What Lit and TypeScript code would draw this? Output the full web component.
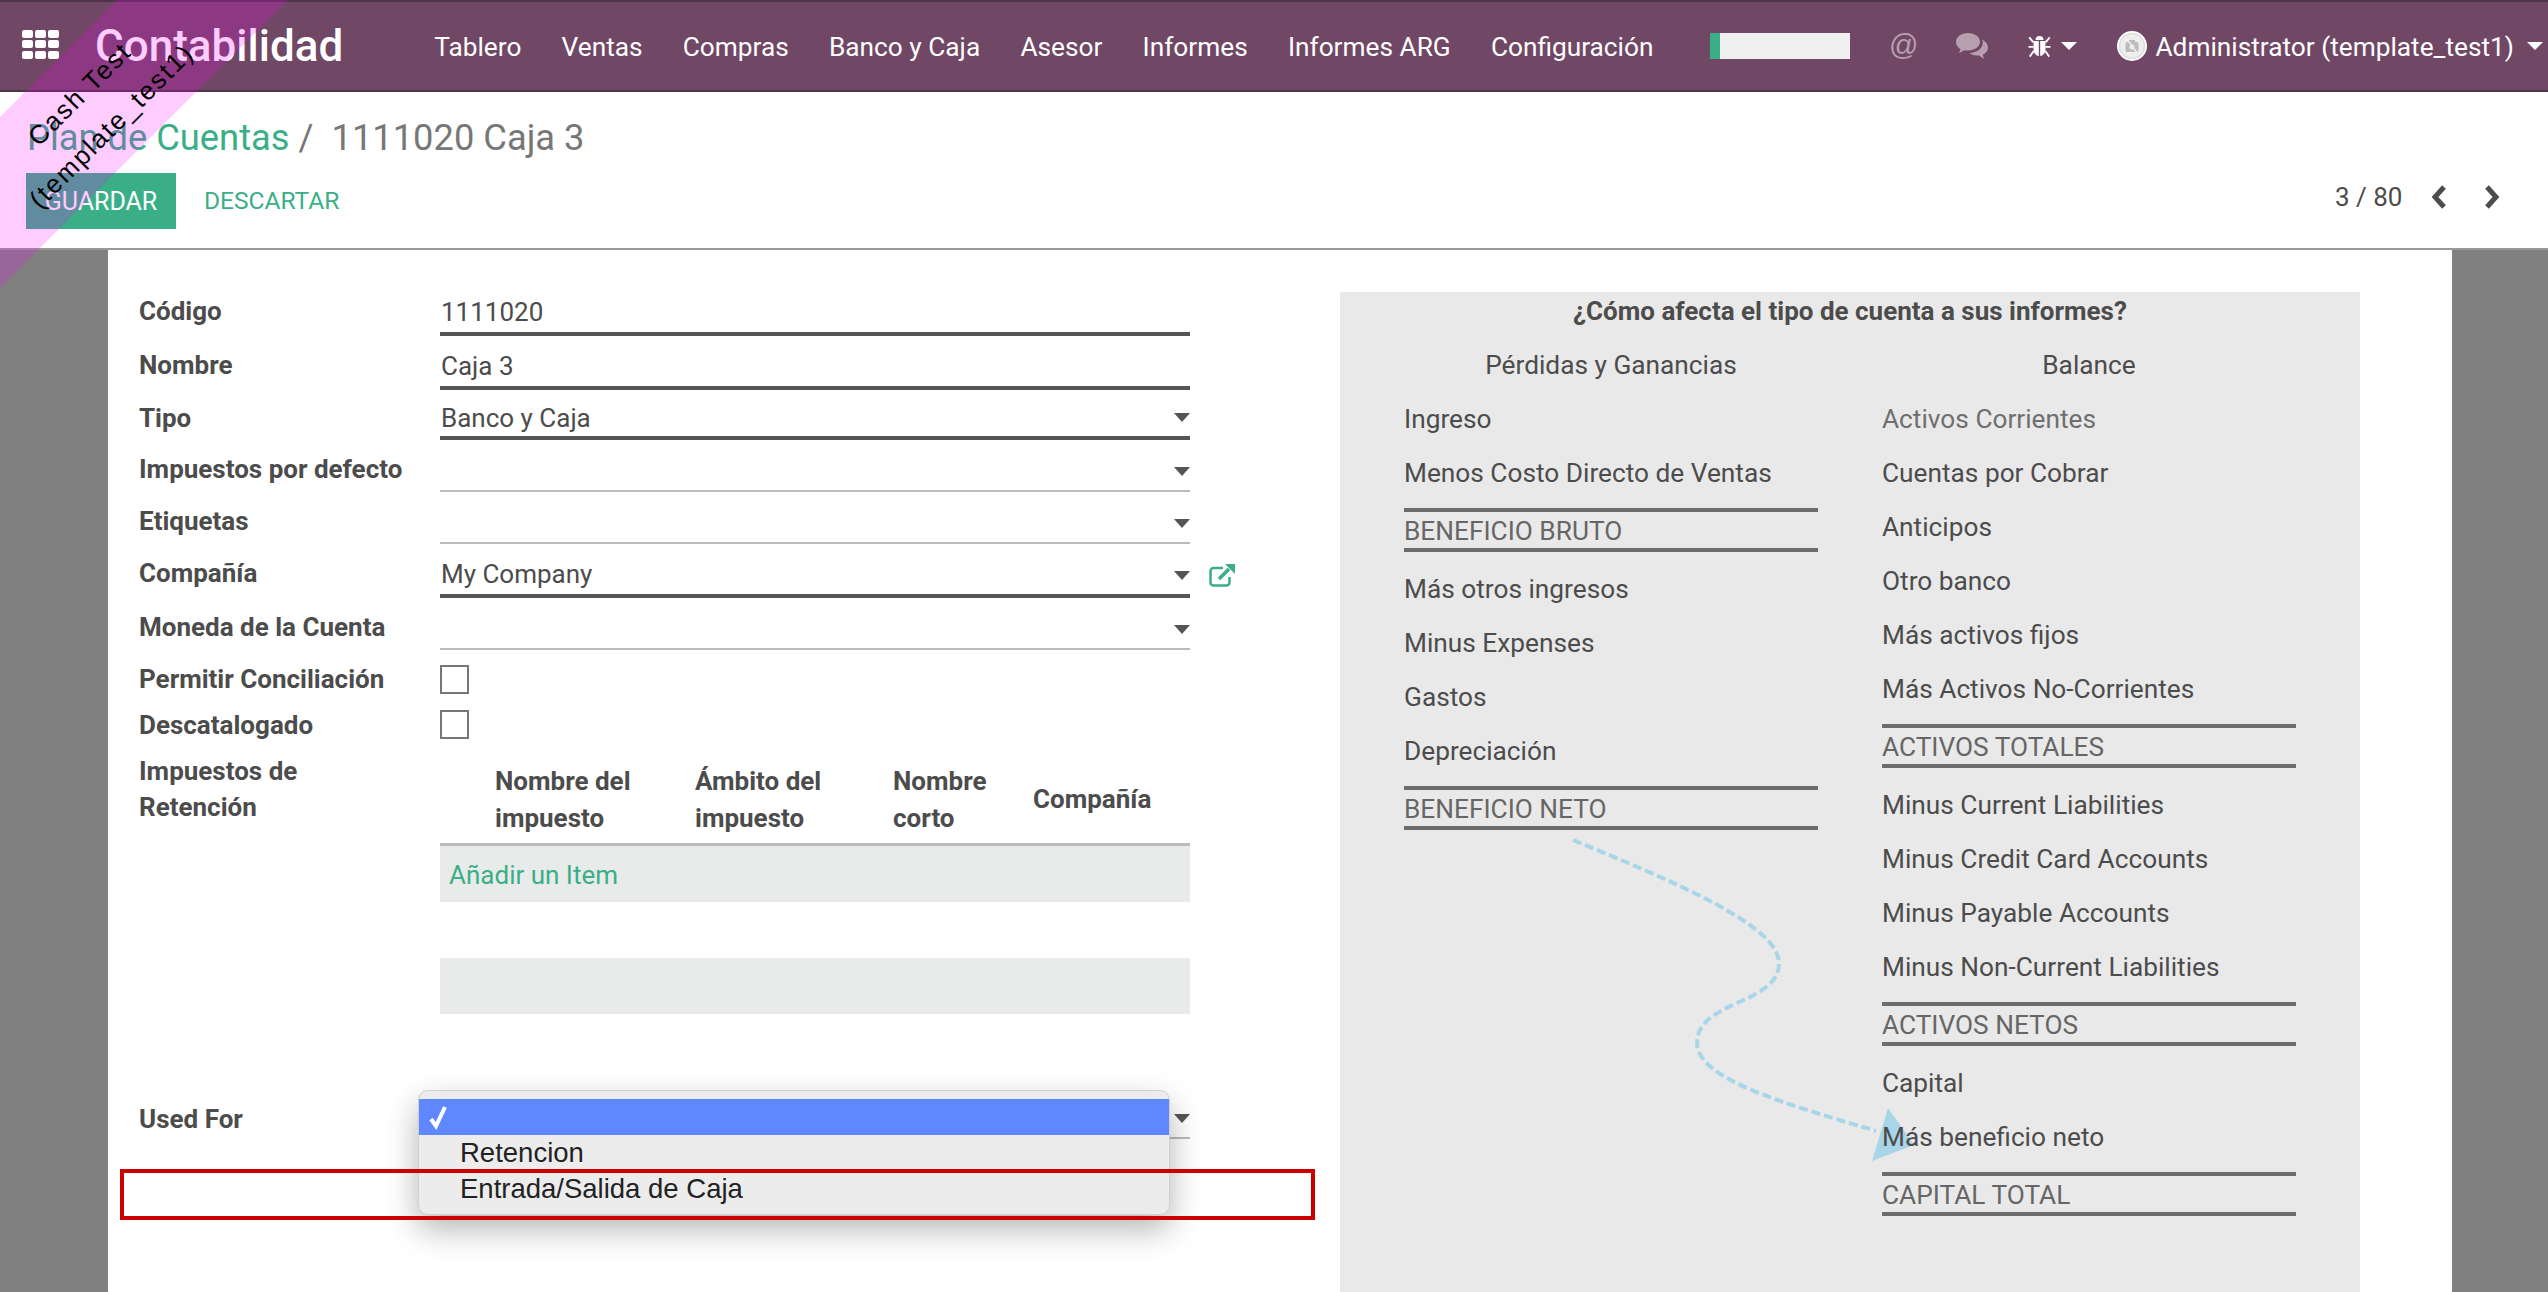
// @ts-nocheck
import {html, css, LitElement} from 'lit';
import {customElement} from 'lit/decorators.js';
import {styleMap} from 'lit/directives/style-map.js';
import {classMap} from 'lit/directives/class-map.js';

const NAV = ['Tablero', 'Ventas', 'Compras', 'Banco y Caja', 'Asesor', 'Informes', 'Informes ARG', 'Configuración'];

// h = row height, d = distance from the label centre to the row bottom
const ROWS = [
  {label: 'Código', value: '1111020', h: 44, d: 25, strong: true, input: true},
  {label: 'Nombre', value: 'Caja 3', h: 54, d: 25, strong: true, input: true},
  {label: 'Tipo', value: 'Banco y Caja', h: 50, d: 22, strong: true, caret: true},
  {label: 'Impuestos por defecto', value: '', h: 52, d: 23, caret: true},
  {label: 'Etiquetas', value: '', h: 52, d: 23, caret: true},
  {label: 'Compañía', value: 'My Company', h: 54, d: 25, strong: true, input: true, caret: true, ext: true},
  {label: 'Moneda de la Cuenta', value: '', h: 52, d: 23, caret: true},
];

const LEFT = [
  'Ingreso', 'Menos Costo Directo de Ventas', {total: 'BENEFICIO BRUTO'},
  'Más otros ingresos', 'Minus Expenses', 'Gastos', 'Depreciación', {total: 'BENEFICIO NETO'},
];
const RIGHT = [
  {muted: 'Activos Corrientes'}, 'Cuentas por Cobrar', 'Anticipos', 'Otro banco', 'Más activos fijos',
  'Más Activos No-Corrientes', {total: 'ACTIVOS TOTALES'},
  'Minus Current Liabilities', 'Minus Credit Card Accounts', 'Minus Payable Accounts',
  'Minus Non-Current Liabilities', {total: 'ACTIVOS NETOS'},
  'Capital', 'Más beneficio neto', {total: 'CAPITAL TOTAL'},
];

@customElement('app-root')
export class AppRoot extends LitElement {
  static styles = css`
    :host {
      display: flex;
      flex-direction: column;
      position: relative;
      width: 2548px;
      height: 1292px;
      overflow: hidden;
      background: #808080;
      font-family: Roboto, "Liberation Sans", sans-serif;
      font-size: 26px;
      color: #4c4c4c;
    }
    * { box-sizing: border-box; }

    .nav {
      flex: none;
      display: flex;
      align-items: center;
      height: 92px;
      background: #704764;
      border-top: 2px solid #4f3349;
      border-bottom: 2px solid #4f3349;
      color: #fff;
    }
    .apps {
      display: grid;
      grid-template-columns: repeat(3, 11px);
      grid-auto-rows: 8px;
      gap: 2.500px 2px;
      margin: -4px 0 0 22px;
    }
    .apps span { background: #fff; border-radius: 2px; }
    .brand { margin-left: 36px; font-size: 44px; font-weight: 500; }
    .menu { display: flex; margin: 1px 0 0 91px; gap: 40.200px; font-size: 26.250px; }
    .tools { display: flex; align-items: center; margin-left: auto; }
    .progress { width: 140px; height: 26px; background: #f0f0f0; border-left: 10px solid #3aaf87; }
    .at { margin: 0 0 3px 39px; font-size: 29px; color: #b79fb0; line-height: 28px; font-family: "Liberation Sans", sans-serif; }
    .chat { margin-left: 38px; }
    .bug { margin-left: 40px; }
    .tri { width: 0; height: 0; border-left: 8px solid transparent; border-right: 8px solid transparent; border-top: 8px solid #fff; }
    .bug-tri { margin-left: 10px; }
    .avatar { margin-left: 40px; }
    .user { margin: 1px 0 0 8px; font-size: 26.250px; }
    .user-tri { margin: 0 5px 0 13px; }

    .panel {
      flex: none;
      position: relative;
      height: 158px;
      background: #fff;
      border-bottom: 2px solid #999;
    }
    .crumbs { position: absolute; left: 27px; top: 24px; font-size: 36.300px; line-height: 44px; color: #777; white-space: pre; }
    .crumbs a { color: #3aaf87; }
    .actions { display: flex; align-items: center; position: absolute; left: 26px; top: 80px; line-height: 58px; }
    .save { width: 150px; height: 56px; background: #3aaf87; color: #fff; text-align: center; font-size: 25px; }
    .discard { margin-left: 28px; color: #3aaf87; font-size: 24.500px; }
    .pager { display: flex; align-items: center; position: absolute; left: 2335px; top: 86px; height: 38px; color: #4c4c4c; }
    .prev { margin-left: 29px; }
    .next { margin-left: 37px; }

    .sheet { flex: 1; display: flex; width: 2344px; margin-left: 108px; padding-top: 42px; background: #fff; overflow: hidden; }
    .form { flex: none; width: 1232px; padding-left: 31px; }
    .row { display: flex; align-items: flex-end; }
    .label { flex: none; width: 301px; font-weight: 700; line-height: 36px; }
    .field { position: relative; display: flex; justify-content: space-between; align-items: flex-end; width: 750px; height: 38px; border-bottom: 2px solid #bbb; }
    .field.strong { height: 40px; border-bottom: 4px solid #555; }
    .field span { line-height: 36px; padding-left: 1px; }
    .field.input span { padding-bottom: 2px; }
    .caret { flex: none; width: 0; height: 0; margin-bottom: 14px; border-left: 8px solid transparent; border-right: 8px solid transparent; border-top: 9px solid #555; }
    .ext { margin: 0 0 11px 19px; }
    .check-row { height: 45px; align-items: center; }
    .check-row.first { margin-top: 7px; }
    .check-row.first .label { margin-top: -2px; }
    .check { width: 29px; height: 29px; border: 2px solid #777; background: #fff; }
    .taxes { display: flex; margin-top: 6px; }
    .table { width: 750px; margin-top: 3px; }
    .head { display: grid; grid-template-columns: 200px 198px 140px 1fr; align-items: center; height: 90px; padding-left: 55px; border-bottom: 3px solid #bbb; font-weight: 700; line-height: 37px; }
    .add { height: 56px; line-height: 58px; padding-left: 9px; background: #e9ebea; color: #3aaf87; }
    .gap { height: 56px; }
    .stripe { height: 56px; background: #e9ebea; }
    .used { margin-top: 73px; height: 52px; }
    .used .label { padding-bottom: 2px; }

    .select { position: absolute; left: -22px; bottom: -78px; width: 752px; height: 125px; padding-top: 8px; background: #ececec; border: 1px solid #d0d0d0; border-radius: 10px; box-shadow: 0 14px 32px rgba(0, 0, 0, 0.3); color: #222; font-family: "Liberation Sans", sans-serif; font-size: 27.500px; overflow: hidden; }
    .opt { height: 36px; line-height: 36px; padding-left: 41px; }
    .opt.on { display: flex; align-items: center; padding-left: 10px; background: #5f87ff; }
    .mark { position: absolute; left: 120px; top: 1169px; width: 1195px; height: 51px; border: 4px solid #c00; }

    .help { position: relative; flex: none; width: 1020px; background: #e9e9e9; text-align: left; font-size: 26.250px; }
    .arrow { position: absolute; left: 0; top: 0; }
    .title { position: relative; font-size: 26px; font-weight: 700; height: 40px; line-height: 38px; text-align: center; }
    .cols { position: relative; display: grid; grid-template-columns: 414px 414px; gap: 64px; padding: 6px 64px 0; }
    .sub { line-height: 54px; text-align: center; }
    .item { line-height: 54px; white-space: nowrap; }
    .item.muted { color: #6f6f6f; }
    .total { margin: 8px 0 10px; height: 44px; line-height: 38px; border-top: 4px solid #6c6c6c; border-bottom: 4px solid #6c6c6c; color: #666; }

    .ribbon { position: absolute; left: -206px; top: 48px; width: 600px; height: 121px; padding-top: 4px; background: rgba(255, 0, 255, 0.2); transform: rotate(-45deg); display: flex; flex-direction: column; justify-content: center; align-items: center; color: #000; font-family: "Liberation Sans", sans-serif; font-size: 26px; letter-spacing: 2px; line-height: 45px; pointer-events: none; }
  `;

  renderApps() {
    return html`<div class="apps">${Array.from({length: 9}, () => html`<span></span>`)}</div>`;
  }

  renderTools() {
    return html`
      <div class="tools">
        <div class="progress"></div>
        <div class="at">@</div>
        <svg class="chat" width="32" height="26" viewBox="0 0 32 26" fill="#b79fb0">
          <path d="M12 0C5.500 0 0 3.800 0 9c0 3 1.800 5.500 4.500 7.200L3 20l5.500-2.800c1 .2 2.300.300 3.500.300 6.500 0 12-3.800 12-8.700S18.500 0 12 0z"/>
          <path d="M26 6.500c.5 1 .8 2 .8 3 0 6-6 10.300-13.300 10.500 1.800 1.600 4.300 2.500 7 2.500.8 0 1.500 0 2.200-.2L28 26l-1.200-4.200c3-1.500 5.200-4 5.200-7 0-3.500-2.400-6.600-6-8.300z"/>
        </svg>
        <svg class="bug" width="23" height="24" viewBox="0 0 22 24" fill="#fff">
          <path d="M7 6a4 4 0 0 1 8 0z"/>
          <path d="M5 7h5.300v15C7 21.500 5 19 5 15z"/>
          <path d="M11.700 7H17v8c0 4-2 6.500-5.300 7z"/>
          <path d="M0 4l1.500-1.300L5.500 7.500 4.300 9zM22 4l-1.500-1.300-4 4.800L17.700 9zM0 12h5v1.800H0zM17 12h5v1.800h-5zM.5 22l4-5.500 1.400 1L2 23.300zM21.500 22l-4-5.500-1.400 1 3.900 5.800z"/>
        </svg>
        <div class="tri bug-tri"></div>
        <svg class="avatar" width="30" height="30" viewBox="0 0 30 30">
          <circle cx="15" cy="15" r="15" fill="#fff"/>
          <circle cx="15" cy="15" r="12.500" fill="#eeeeee" stroke="#dddddd" stroke-width="1.500"/>
          <rect x="8.500" y="11" width="13" height="10" rx="1.500" fill="#bdbdbd"/>
          <rect x="12" y="9" width="6" height="3" fill="#bdbdbd"/>
          <circle cx="15" cy="16" r="2.500" fill="#eeeeee"/>
          <path d="M10 8l10 14" stroke="#eeeeee" stroke-width="1.500"/>
        </svg>
        <div class="user">Administrator (template_test1)</div>
        <div class="tri user-tri"></div>
      </div>
    `;
  }

  renderRow(r) {
    return html`
      <div class="row" style=${styleMap({height: `${r.h}px`})}>
        <div class="label" style=${styleMap({paddingBottom: `${r.d - 18}px`})}>${r.label}</div>
        <div class=${classMap({field: true, strong: !!r.strong, input: !!r.input})}>
          <span>${r.value}</span>
          ${r.caret ? html`<div class="caret"></div>` : ''}
        </div>
        ${r.ext ? html`
          <svg class="ext" width="26" height="24" viewBox="0 0 26 24" fill="none" stroke="#3aaf87">
            <path d="M14 5H4.500a3 3 0 0 0-3 3v11.500a3 3 0 0 0 3 3h13a3 3 0 0 0 3-3V14" stroke-width="2.500"/>
            <path d="M10 16L20 6" stroke-width="3.500"/>
            <path d="M16 1h10v10z" fill="#3aaf87" stroke="none"/>
          </svg>` : ''}
      </div>
    `;
  }

  renderItem(it) {
    if (typeof it === 'string') return html`<div class="item">${it}</div>`;
    if (it.muted) return html`<div class="item muted">${it.muted}</div>`;
    return html`<div class="total">${it.total}</div>`;
  }

  render() {
    return html`
      <div class="nav">
        ${this.renderApps()}
        <div class="brand">Contabilidad</div>
        <div class="menu">${NAV.map((n) => html`<div>${n}</div>`)}</div>
        ${this.renderTools()}
      </div>

      <div class="panel">
        <div class="crumbs"><a>Plan de Cuentas</a> /  1111020 Caja 3</div>
        <div class="actions">
          <div class="save">GUARDAR</div>
          <div class="discard">DESCARTAR</div>
        </div>
        <div class="pager">
          <span>3 / 80</span>
          <svg class="prev" width="16" height="24" viewBox="0 0 16 24" fill="none" stroke="#4c4c4c" stroke-width="5"><path d="M13 2L4 12l9 10"/></svg>
          <svg class="next" width="16" height="24" viewBox="0 0 16 24" fill="none" stroke="#4c4c4c" stroke-width="5"><path d="M3 2l9 10-9 10"/></svg>
        </div>
      </div>

      <div class="sheet">
        <div class="form">
          ${ROWS.map((r) => this.renderRow(r))}
          <div class="row check-row first"><div class="label">Permitir Conciliación</div><div class="check"></div></div>
          <div class="row check-row"><div class="label">Descatalogado</div><div class="check"></div></div>
          <div class="taxes">
            <div class="label">Impuestos de<br />Retención</div>
            <div class="table">
              <div class="head">
                <div>Nombre del<br />impuesto</div>
                <div>Ámbito del<br />impuesto</div>
                <div>Nombre<br />corto</div>
                <div>Compañía</div>
              </div>
              <div class="add">Añadir un Item</div>
              <div class="gap"></div>
              <div class="stripe"></div>
            </div>
          </div>
          <div class="row used">
            <div class="label">Used For</div>
            <div class="field">
              <span></span>
              <div class="caret"></div>
              <div class="select">
                <div class="opt on">
                  <svg width="20" height="26" viewBox="0 0 20 26" fill="none" stroke="#fff" stroke-width="4"><path d="M2 15l5 7L16 3"/></svg>
                </div>
                <div class="opt">Retencion</div>
                <div class="opt">Entrada/Salida de Caja</div>
              </div>
            </div>
          </div>
        </div>

        <div class="help">
          <svg class="arrow" width="1020" height="1000" viewBox="1340 292 1020 1000">
            <path d="M1573 840C1670 880 1779 925 1779 963C1779 1005 1697 1000 1697 1043C1697 1080 1790 1105 1876 1131" fill="none" stroke="#a8d5e8" stroke-width="4" stroke-dasharray="9 4"/>
            <path d="M1888 1108L1872 1161L1914 1145Z" fill="#a8d5e8"/>
          </svg>
          <div class="title">¿Cómo afecta el tipo de cuenta a sus informes?</div>
          <div class="cols">
            <div>
              <div class="sub">Pérdidas y Ganancias</div>
              ${LEFT.map((i) => this.renderItem(i))}
            </div>
            <div>
              <div class="sub">Balance</div>
              ${RIGHT.map((i) => this.renderItem(i))}
            </div>
          </div>
        </div>
      </div>

      <div class="mark"></div>
      <div class="ribbon"><div>Cash Test</div><div>(template_test1)</div></div>
    `;
  }
}
